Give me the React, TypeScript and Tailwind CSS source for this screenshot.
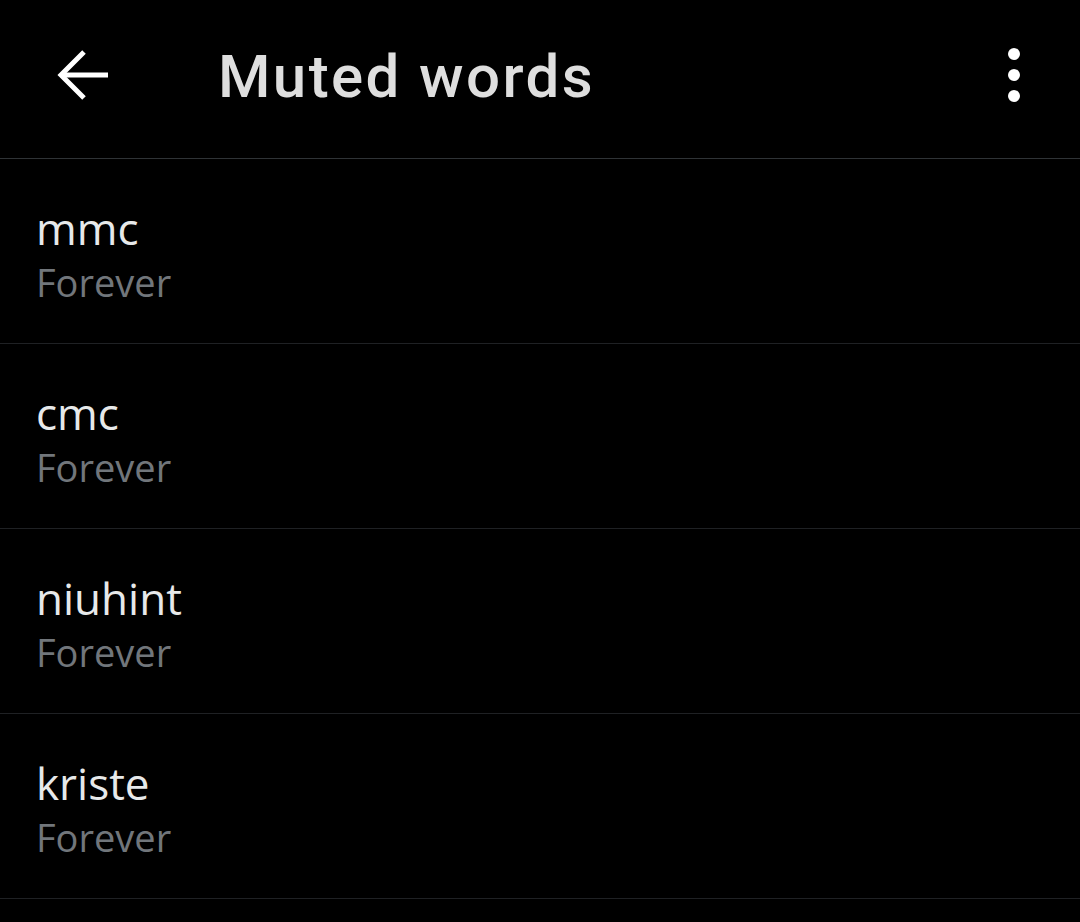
const words = ['mmc', 'cmc', 'niuhint', 'kriste'];

function BackIcon() {
    return (
        <svg width="56" height="56" viewBox="0 0 56 56" fill="none" stroke="#ffffff" strokeWidth={5}>
            <path d="M5 28H52" />
            <path d="M28 5L5 28L28 51" strokeLinejoin="miter" />
        </svg>
    );
}

function MoreIcon() {
    return (
        <svg width="24" height="60" viewBox="0 0 24 60" fill="#ffffff">
            <circle cx="12" cy="9" r="6" />
            <circle cx="12" cy="30" r="6" />
            <circle cx="12" cy="51" r="6" />
        </svg>
    );
}

function MutedRow({ word }: { word: string }) {
    return (
        <div className="h-[185px] flex flex-col justify-center pl-[36px] pt-[8px] border-b border-[#1f2124] font-['Open_Sans',sans-serif]">
            <div className="text-[44px] leading-[54px] text-[#e7e9ea]">{word}</div>
            <div className="text-[38px] leading-[54px] text-[#71767b]">Forever</div>
        </div>
    );
}

export default function App() {
    return (
        <div className="w-[1080px] h-[922px] bg-black overflow-hidden">
            <header className="h-[159px] flex items-center border-b border-[#2f3336]">
                <div className="w-[218px] pl-[56px] pb-[8px] flex items-center">
                    <BackIcon />
                </div>
                <h1 className="flex-1 text-[60px] font-medium tracking-[2.4px] text-[#dedede] font-['Roboto',sans-serif] pb-1">
                    Muted words
                </h1>
                <div className="pr-[54px] pb-[8px]">
                    <MoreIcon />
                </div>
            </header>
            {words.map((w) => (
                <MutedRow key={w} word={w} />
            ))}
        </div>
    );
}
